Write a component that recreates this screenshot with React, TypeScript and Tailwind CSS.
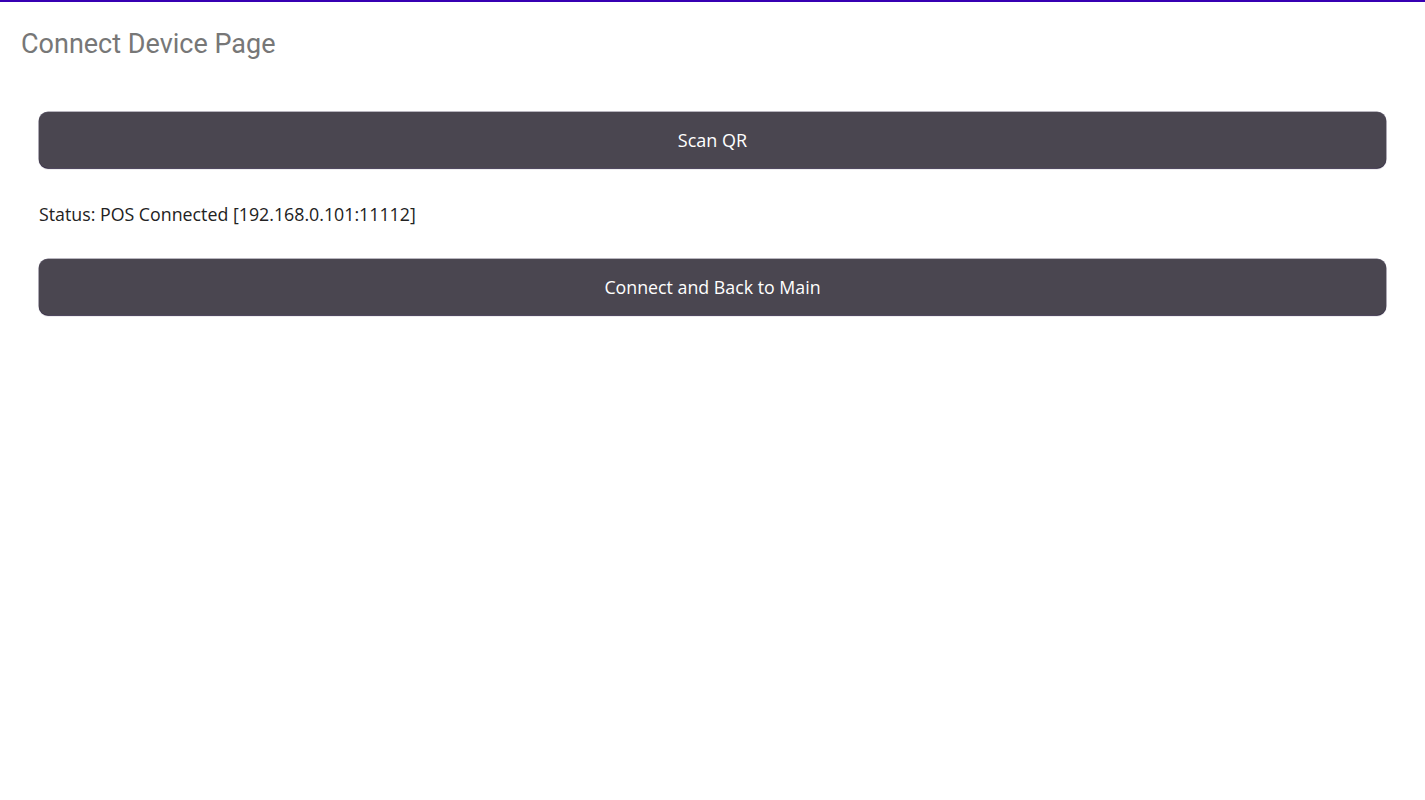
export default function App() {
  return (
    <div className="min-h-screen bg-white" style={{ fontFamily: '"Open Sans", sans-serif' }}>
      <div className="h-[2px] bg-[#3700b3]" />
      {/* Header */}
      <div className="px-[21px] pt-[27px]">
        <h1 className="font-['Roboto',sans-serif] text-[27px] leading-[30px] font-normal text-[#777777]">
          Connect Device Page
        </h1>
      </div>

      {/* Content */}
      <div className="pl-[39px] pr-[39px] pt-[53px] flex flex-col">
        <button className="h-[56px] w-full rounded-[9px] bg-[#4a4650] text-white text-[18px] shadow-[0_0_0_0.5px_rgba(20,10,40,0.6),0_1px_1px_rgba(20,10,40,0.7)]">
          Scan QR
        </button>
        <p className="mt-[34px] text-[17.8px] leading-[24px] text-[#222222]">
          Status: POS Connected [192.168.0.101:11112]
        </p>
        <button className="mt-[33px] h-[56px] w-full rounded-[9px] bg-[#4a4650] text-white text-[17.8px] shadow-[0_0_0_0.5px_rgba(20,10,40,0.6),0_1px_1px_rgba(20,10,40,0.7)]">
          Connect and Back to Main
        </button>
      </div>
    </div>
  );
}
